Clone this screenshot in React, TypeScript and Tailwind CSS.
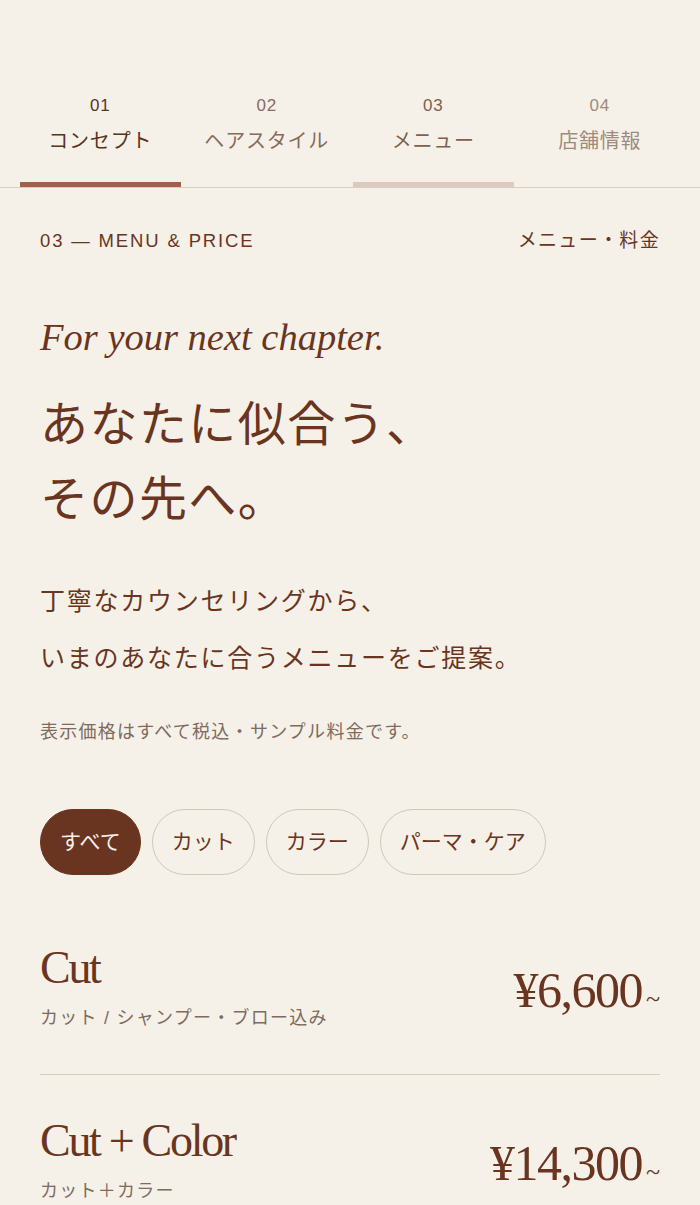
import { useState } from "react";

const sans = "font-['Liberation_Sans','Noto_Sans_CJK_JP',sans-serif]";
const serif = "font-['Liberation_Serif','Noto_Serif_CJK_JP','Noto_Sans_CJK_JP',serif]";

const tabs = [
  { no: "01", label: "コンセプト", tone: "text-[#5a3322]", bar: "bg-[#a35f4b]" },
  { no: "02", label: "ヘアスタイル", tone: "text-[#8a6a5a]", bar: "bg-transparent" },
  { no: "03", label: "メニュー", tone: "text-[#7f5f50]", bar: "bg-[#dccabf]" },
  { no: "04", label: "店舗情報", tone: "text-[#a08a7d]", bar: "bg-transparent" },
];

const filters = ["すべて", "カット", "カラー", "パーマ・ケア"];

const menu = [
  { name: "Cut", note: "カット / シャンプー・ブロー込み", price: "¥6,600" },
  { name: "Cut + Color", note: "カット＋カラー", price: "¥14,300" },
];

export default function App() {
  const [active, setActive] = useState(0);

  return (
    <div className={`min-h-screen bg-[#f5f1e9] text-[#6a3520] ${sans}`}>
      {/* Tabs */}
      <nav className="pt-[96px] px-[17px] grid grid-cols-4 border-b border-[#d7cfc2]">
        {tabs.map((t) => (
          <a key={t.no} href="#" className={`flex flex-col items-center ${t.tone}`}>
            <span className="text-[17px] leading-[20px] tracking-[0.04em]">{t.no}</span>
            <span className="mt-[12px] text-[20px] leading-[26px] tracking-[0.04em]">{t.label}</span>
            <span className={`mt-[28px] h-[5px] self-stretch mx-[3px] ${t.bar}`} />
          </a>
        ))}
      </nav>

      <main className="px-10">
        {/* Section head */}
        <div className="mt-[41px] flex items-center justify-between leading-[24px]">
          <span className="text-[18.5px] tracking-[0.1em]">03 — MENU &amp; PRICE</span>
          <span className="text-[19px] tracking-[0.07em]">メニュー・料金</span>
        </div>

        <p className={`mt-[62px] italic text-[38.5px] leading-[44px] ${serif}`}>For your next chapter.</p>

        <h1 className="mt-[28px] text-[48px] leading-[75px] tracking-[0.03em] font-normal">
          あなたに似合う、
          <br />
          その先へ。
        </h1>

        <p className="mt-[36px] text-[25px] leading-[57px] tracking-[0.07em]">
          丁寧なカウンセリングから、
          <br />
          いまのあなたに合うメニューをご提案。
        </p>

        <p className="mt-[32px] text-[18px] leading-[26px] tracking-[0.07em] text-[#7d6b60]">
          表示価格はすべて税込・サンプル料金です。
        </p>

        {/* Filters */}
        <div className="mt-[64px] flex gap-[11px]">
          {filters.map((f, i) => (
            <button
              key={f}
              onClick={() => setActive(i)}
              className={`h-[66px] px-[19px] rounded-full border text-[21px] ${
                active === i
                  ? "bg-[#6a3520] border-[#6a3520] text-[#f5f1e9]"
                  : "bg-transparent border-[#cfc8b9] text-[#6a3520]"
              }`}
            >
              {f}
            </button>
          ))}
        </div>

        {/* Menu list */}
        <ul className="mt-[27px]">
          {menu.map((m, i) => (
            <li
              key={m.name}
              className={`pt-[40px] pb-[44px] flex items-center justify-between ${
                i < menu.length - 1 ? "border-b border-[#d6cdbf]" : ""
              }`}
            >
              <div>
                <p className={`text-[46px] leading-[52px] tracking-[-0.05em] ${serif}`}>{m.name}</p>
                <p className="mt-[12px] text-[18px] leading-[24px] tracking-[0.07em] text-[#7d6b60]">{m.note}</p>
              </div>
              <p className={`mt-[8px] flex items-baseline ${serif}`}>
                <span className="text-[50px] leading-[56px] tracking-[-0.03em]">{m.price}</span>
                <span className="ml-[4px] text-[26px]">~</span>
              </p>
            </li>
          ))}
        </ul>
      </main>
    </div>
  );
}
